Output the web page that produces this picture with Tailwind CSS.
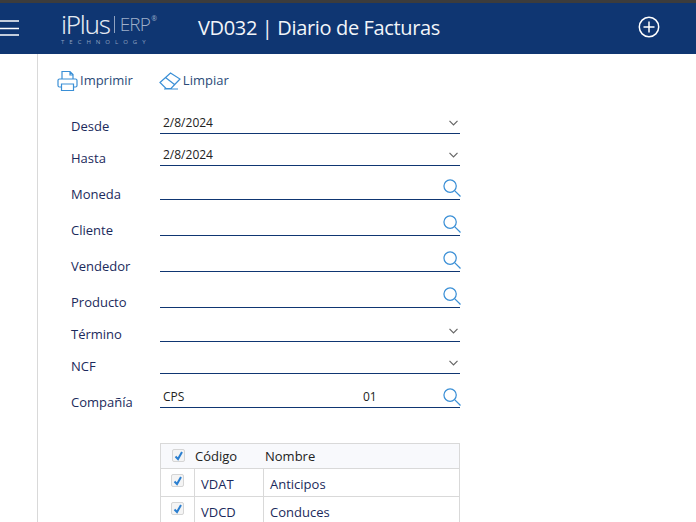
<!DOCTYPE html>
<html lang="es">
<head>
  <meta charset="UTF-8" />
  <title>VD032 | Diario de Facturas</title>
  <script src="https://cdn.jsdelivr.net/npm/@tailwindcss/browser@4"></script>
</head>
<body class="h-[522px] overflow-hidden bg-white font-['Open_Sans',sans-serif] text-[13px] text-[#1b2a5c]">
  <div class="h-[3px] bg-[#3c3c3c]"></div>
  <header class="h-[51px] bg-[#0f3672] flex items-center text-white relative">
    <svg class="w-[20px] h-[16px] -mt-[1px]" viewBox="0 0 20 16" stroke="#fff" stroke-width="1.600"><path d="M0 1h19M0 8.500h19M0 15h19"/></svg>
    <div class="ml-[41px] w-[116px] -mt-[3px] text-[#c9d3e3]">
      <div class="flex items-center leading-none h-[29px]">
        <span class="text-[26px] tracking-[-1.300px] font-['Noto_Sans',sans-serif] font-light text-[#e4e9f1]">iPlus</span>
        <span class="ml-[4px] w-px h-[17px] bg-[#8fa2c0]"></span>
        <span class="ml-[5px] text-[19px] tracking-[-0.800px] font-light text-[#9fb0ca]">ERP</span>
        <span class="text-[7px] self-start mt-[5px] ml-[1px] text-[#9fb0ca]">®</span>
      </div>
      <div class="text-[6px] leading-[6px] tracking-[5px] text-[#8fa2c0] whitespace-nowrap">TECHNOLOGY</div>
    </div>
    <h1 class="ml-[21px] -mt-[2px] text-[20px] text-[#f2f5f9] tracking-[-0.350px] whitespace-nowrap">VD032 | Diario de Facturas</h1>
    <svg class="absolute left-[638px] top-[13px] w-[22px] h-[22px]" viewBox="0 0 22 22" fill="none" stroke="#fff" stroke-width="1.500"><circle cx="11" cy="11" r="9.700"/><path d="M11 5.500v11M5.500 11h11"/></svg>
  </header>
  <main class="ml-[37px] border-l border-[#d9d9d9] h-[468px]">
    <div class="flex items-center h-[53px] pl-[19px] text-[#2a4a78]">
      <svg class="w-[21px] h-[22px]" viewBox="0 0 21 22" fill="none" stroke="#3a8fd6" stroke-width="1.200"><path d="M5 9V1.500h8l3 3V9M13 1.500V5h3M4.500 17H2.500a1.500 1.500 0 0 1-1.500-1.500v-5A1.500 1.500 0 0 1 2.500 9h16a1.500 1.500 0 0 1 1.500 1.500v5a1.500 1.500 0 0 1-1.500 1.500h-2M4.500 14h12v6.500h-12z"/></svg>
      <span class="ml-[2px]">Imprimir</span>
      <svg class="ml-[26px] w-[23px] h-[18px]" viewBox="0 0 23 18" fill="none" stroke="#3a8fd6" stroke-width="1.200"><path d="M1 10.500L11.500 1l9.500 6-9 9.500H7zM6.500 5.500L15.500 12.500M5 17h14"/></svg>
      <span class="ml-[1px]">Limpiar</span>
    </div>

    <form class="pl-[33px] w-[422px]">
      <div class="flex h-[27px]">
        <label class="w-[89px] pt-[10px]">Desde</label>
        <div class="flex-1 border-b border-[#0f3672] h-[27px] flex justify-between pl-[3px] pt-[7px] text-[12px] text-[#222] leading-[17px]">2/8/2024
          <svg class="w-[9px] h-[6px] mt-[6px] mr-[2px]" viewBox="0 0 9 6" fill="none" stroke="#666" stroke-width="1.200"><path d="M.5 .8L4.500 4.800 8.500 .8"/></svg>
        </div>
      </div>
      <div class="flex h-[32px] items-end">
        <label class="w-[89px] self-start pt-[15px]">Hasta</label>
        <div class="flex-1 border-b border-[#0f3672] h-[27px] flex justify-between pl-[3px] pt-[7px] text-[12px] text-[#222] leading-[17px]">2/8/2024
          <svg class="w-[9px] h-[6px] mt-[6px] mr-[2px]" viewBox="0 0 9 6" fill="none" stroke="#666" stroke-width="1.200"><path d="M.5 .8L4.500 4.800 8.500 .8"/></svg>
        </div>
      </div>
      <div class="flex h-[34px] items-end">
        <label class="w-[89px] self-end -mb-[4px]">Moneda</label>
        <div class="flex-1 border-b border-[#0f3672] h-[25px] flex justify-end">
          <svg class="w-[18px] h-[18px] mt-[4px] -mr-[1px]" viewBox="0 0 19 19" fill="none" stroke="#3a8fd6" stroke-width="1.300"><circle cx="7.500" cy="7.500" r="6.500"/><path d="M12.500 12.500L18.500 18.500"/></svg>
        </div>
      </div>
      <div class="flex h-[36px] items-end">
        <label class="w-[89px] self-end -mb-[4px]">Cliente</label>
        <div class="flex-1 border-b border-[#0f3672] h-[25px] flex justify-end">
          <svg class="w-[18px] h-[18px] mt-[4px] -mr-[1px]" viewBox="0 0 19 19" fill="none" stroke="#3a8fd6" stroke-width="1.300"><circle cx="7.500" cy="7.500" r="6.500"/><path d="M12.500 12.500L18.500 18.500"/></svg>
        </div>
      </div>
      <div class="flex h-[36px] items-end">
        <label class="w-[89px] self-end -mb-[4px]">Vendedor</label>
        <div class="flex-1 border-b border-[#0f3672] h-[25px] flex justify-end">
          <svg class="w-[18px] h-[18px] mt-[4px] -mr-[1px]" viewBox="0 0 19 19" fill="none" stroke="#3a8fd6" stroke-width="1.300"><circle cx="7.500" cy="7.500" r="6.500"/><path d="M12.500 12.500L18.500 18.500"/></svg>
        </div>
      </div>
      <div class="flex h-[36px] items-end">
        <label class="w-[89px] self-end -mb-[4px]">Producto</label>
        <div class="flex-1 border-b border-[#0f3672] h-[25px] flex justify-end">
          <svg class="w-[18px] h-[18px] mt-[4px] -mr-[1px]" viewBox="0 0 19 19" fill="none" stroke="#3a8fd6" stroke-width="1.300"><circle cx="7.500" cy="7.500" r="6.500"/><path d="M12.500 12.500L18.500 18.500"/></svg>
        </div>
      </div>
      <div class="flex h-[34px] items-end">
        <label class="w-[89px] self-end -mb-[2px]">Término</label>
        <div class="flex-1 border-b border-[#0f3672] h-[25px] flex justify-end">
          <svg class="w-[9px] h-[6px] mt-[11px] mr-[2px]" viewBox="0 0 9 6" fill="none" stroke="#666" stroke-width="1.200"><path d="M.5 .8L4.500 4.800 8.500 .8"/></svg>
        </div>
      </div>
      <div class="flex h-[32px] items-end">
        <label class="w-[89px] self-end -mb-[2px]">NCF</label>
        <div class="flex-1 border-b border-[#0f3672] h-[25px] flex justify-end">
          <svg class="w-[9px] h-[6px] mt-[11px] mr-[2px]" viewBox="0 0 9 6" fill="none" stroke="#666" stroke-width="1.200"><path d="M.5 .8L4.500 4.800 8.500 .8"/></svg>
        </div>
      </div>
      <div class="flex h-[34px] items-end">
        <label class="w-[89px] self-end -mb-[4px]">Compañía</label>
        <div class="flex-1 border-b border-[#0f3672] h-[25px] flex pl-[3px] text-[12px] text-[#222] leading-[28px]">
          <span class="w-[200px]">CPS</span><span class="flex-1">01</span>
          <svg class="w-[18px] h-[18px] mt-[5px] -mr-[1px]" viewBox="0 0 19 19" fill="none" stroke="#3a8fd6" stroke-width="1.300"><circle cx="7.500" cy="7.500" r="6.500"/><path d="M12.500 12.500L18.500 18.500"/></svg>
        </div>
      </div>
    </form>

    <div class="ml-[122px] mt-[35px] w-[300px] border-x border-[#d9d9d9]">
      <div class="h-[26px] border-y border-[#d9d9d9] bg-[#f8f9fc] flex items-center text-[#222] pt-[2px]">
        <span class="ml-[11px] -mt-[3px] w-[13px] h-[13px] border border-[#d5d5d5] rounded-[2px] bg-[#f4f4f4] flex items-center justify-center">
          <svg class="w-[10px] h-[10px]" viewBox="0 0 10 10" fill="none" stroke="#2b7fd0" stroke-width="2"><path d="M1.500 5.500l2.500 2.500L8 1"/></svg>
        </span>
        <span class="ml-[10px] w-[70px]">Código</span><span>Nombre</span>
      </div>
      <div class="h-[28px] border-b border-[#d9d9d9] flex">
        <div class="w-[34px] border-r border-[#d9d9d9] pl-[10px] pt-[5px]">
          <span class="w-[13px] h-[13px] border border-[#d5d5d5] rounded-[2px] bg-[#f4f4f4] flex items-center justify-center">
            <svg class="w-[10px] h-[10px]" viewBox="0 0 10 10" fill="none" stroke="#2b7fd0" stroke-width="2"><path d="M1.500 5.500l2.500 2.500L8 1"/></svg>
          </span>
        </div>
        <div class="w-[69px] border-r border-[#d9d9d9] pl-[6px] leading-[30px]">VDAT</div>
        <div class="pl-[6px] leading-[30px]">Anticipos</div>
      </div>
      <div class="h-[28px] border-b border-[#d9d9d9] flex">
        <div class="w-[34px] border-r border-[#d9d9d9] pl-[10px] pt-[5px]">
          <span class="w-[13px] h-[13px] border border-[#d5d5d5] rounded-[2px] bg-[#f4f4f4] flex items-center justify-center">
            <svg class="w-[10px] h-[10px]" viewBox="0 0 10 10" fill="none" stroke="#2b7fd0" stroke-width="2"><path d="M1.500 5.500l2.500 2.500L8 1"/></svg>
          </span>
        </div>
        <div class="w-[69px] border-r border-[#d9d9d9] pl-[6px] leading-[30px]">VDCD</div>
        <div class="pl-[6px] leading-[30px]">Conduces</div>
      </div>
    </div>
  </main>
</body>
</html>
